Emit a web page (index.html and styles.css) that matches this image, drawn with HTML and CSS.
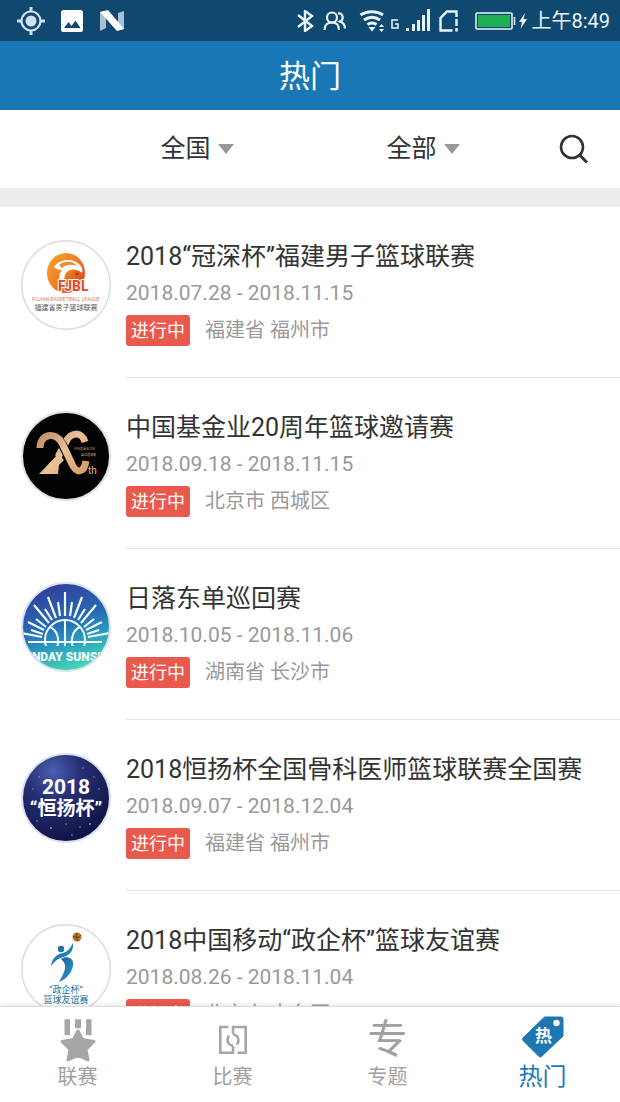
FILE: index.html
```html
<!DOCTYPE html>
<html lang="zh-CN">
<head>
<meta charset="utf-8">
<meta name="viewport" content="width=device-width, initial-scale=1">
<title>热门</title>
<link rel="stylesheet" href="styles.css">
</head>
<body>
<div class="app">
  <div class="status">
    <div class="status-left">
      <svg width="28" height="28" viewBox="0 0 28 28"><circle cx="14" cy="14" r="9.500" fill="none" stroke="#cfe0f2" stroke-width="2.200"/><circle cx="14" cy="14" r="5.500" fill="#cfe0f2"/><path d="M14 0v5M14 23v5M0 14h5M23 14h5" stroke="#cfe0f2" stroke-width="3"/></svg>
      <svg width="24" height="24" viewBox="0 0 24 24"><rect x="1" y="1" width="22" height="22" rx="2.500" fill="#fff"/><path d="M4 19l4.500-6 3 4 4-5.500 5 7.500z" fill="#10496f"/></svg>
      <svg width="26" height="22" viewBox="0 0 26 22"><path d="M1 2l6-1v17l-6 3zM25 1l-6 2v17l6-1z" fill="#a9c0d3"/><path d="M1 2l8-2L25 19l-7 2z" fill="#fff"/></svg>
    </div>
    <div class="status-right">
      <svg width="18" height="22" viewBox="0 0 18 22"><path d="M1 5l14 11-7 5V1l7 5L1 17" fill="none" stroke="#e8f7ff" stroke-width="2.400"/></svg>
      <svg class="people" width="24" height="20" viewBox="0 0 24 20"><g fill="none" stroke="#e8f7ff" stroke-width="2.200"><circle cx="9" cy="6.500" r="5"/><path d="M1.500 19c0-5 3-7.500 7.500-7.500s7 2.500 7 7.500M15 2.500c5-1 6.500 6 2 8 3 1 5 3.500 5 7"/></g></svg>
      <svg class="wifi" width="28" height="22" viewBox="0 0 28 22"><g fill="none" stroke="#e8f7ff" stroke-width="3"><path d="M1.500 5C8 .5 18 .5 24 5M5 10c5-3.500 11-3.500 16 0M8.500 14.500c3-2 6-2 9 0"/></g><path d="M9.500 17h7L13 21.500zM20 17l2.500-3 2.500 3zM20 19l2.500 3 2.500-3z" fill="#e8f7ff"/></svg>
      <svg class="network" width="8" height="10" viewBox="0 0 8 10"><path d="M7 1H1v8h6V5H4" fill="none" stroke="#e8f7ff" stroke-width="1.500"/></svg>
      <svg class="signal" width="24" height="23" viewBox="0 0 24 23"><path d="M1.500 19v3M7.500 15v7M12.500 11v11M17.500 6v16M22.500 0v22" stroke="#e8f7ff" stroke-width="3"/></svg>
      <svg class="sim" width="20" height="22" viewBox="0 0 20 22"><path d="M17.500 7V1.500H8L1.500 8v12.500h12M17.500 9v7M17.500 18v3.500" fill="none" stroke="#e8f7ff" stroke-width="2.400"/></svg>
      <svg class="battery" width="41" height="18" viewBox="0 0 41 18"><rect x="1" y="1" width="36" height="16" rx="1" fill="#10496f" stroke="#e8f7ff" stroke-width="1.500"/><rect x="3" y="3" width="32" height="12" fill="#1faf52"/><path d="M39.500 5v8" stroke="#e8f7ff" stroke-width="1.500"/></svg>
      <svg class="bolt" width="8" height="16" viewBox="0 0 8 16"><path d="M6 0L0 9h3l-1.500 7L8 6H4.500z" fill="#e8f7ff"/></svg>
      <span class="clock">上午8:49</span>
    </div>
  </div>

  <header class="header"><h1>热门</h1></header>

  <form class="filters">
    <label class="filter">
      <select aria-label="地区"><option>全国</option></select>
      <svg width="16" height="10" viewBox="0 0 16 10"><path d="M0 0h16L8 10z" fill="#999"/></svg>
    </label>
    <label class="filter">
      <select aria-label="类型"><option>全部</option></select>
      <svg width="16" height="10" viewBox="0 0 16 10"><path d="M0 0h16L8 10z" fill="#999"/></svg>
    </label>
    <button class="search" type="button" aria-label="搜索">
      <svg width="30" height="30" viewBox="0 0 30 30"><g fill="none" stroke="#333" stroke-width="2.600"><circle cx="13" cy="13" r="11"/><path d="M20.500 21l7.500 7.500" stroke-width="3"/></g></svg>
    </button>
  </form>

  <main class="list">
    <article class="item">
      <svg class="avatar" viewBox="0 0 90 90" role="img" aria-label="FJBL">
        <defs><linearGradient id="fire" x1="0" y1="0" x2="1" y2="1"><stop offset="0" stop-color="#f6a92a"/><stop offset=".5" stop-color="#ef7d23"/><stop offset="1" stop-color="#c9351f"/></linearGradient></defs>
        <circle cx="45" cy="45" r="44.300" fill="#fff" stroke="#dcdcdc" stroke-width="1.400"/>
        <ellipse cx="45" cy="33" rx="19" ry="20" fill="url(#fire)"/>
        <path d="M33 27c5-8 19-10 26-2 2 2 3 5 2 8-6-5-13-4-16 0-3 5-2 10 1 15h-5c-4-6-4-13 0-18-3 0-6-1-8-3z" fill="#fff"/>
        <path d="M38 25c6-5 15-4 18 1-5-2-11-2-15 2z" fill="#ef8a26"/>
        <circle cx="56" cy="34" r="1.500" fill="#b33118"/>
        <text class="logo-fjbl" x="37" y="51">FJBL</text>
        <text class="logo-fjbl-en" x="45" y="61">FUJIAN BASKETBALL LEAGUE</text>
        <text class="logo-fjbl-cn" x="45" y="70">福建省男子篮球联赛</text>
      </svg>
      <div class="info">
        <h2>2018“冠深杯”福建男子篮球联赛</h2>
        <p class="date">2018.07.28 - 2018.11.15</p>
        <p class="meta"><span class="tag">进行中</span><span>福建省 福州市</span></p>
      </div>
    </article>

    <article class="item">
      <svg class="avatar" viewBox="0 0 90 90" role="img" aria-label="20th">
        <defs><linearGradient id="gold" gradientUnits="userSpaceOnUse" x1="16" y1="20" x2="66" y2="64"><stop offset="0" stop-color="#b98463"/><stop offset=".5" stop-color="#e9c296"/><stop offset="1" stop-color="#d59a62"/></linearGradient></defs>
        <circle cx="45" cy="45" r="44" fill="#030303" stroke="#e2e2e2" stroke-width="2"/>
        <path d="M18 63l19-20 6 6-5 5-1 9z" fill="url(#gold)"/>
        <path d="M64 31c-3-11-15-10-19 0l-8 15" fill="none" stroke="url(#gold)" stroke-width="7"/>
        <path d="M21 37c0-14 14-15 20-4l10 19" fill="none" stroke="#030303" stroke-width="9"/>
        <path d="M19 37c0-14 15-17 22-5l9 19c5 12 13 12 15-1" fill="none" stroke="url(#gold)" stroke-width="7"/>
        <text class="logo-tiny" x="53" y="39">中国基金业20年</text>
        <text class="logo-tiny" x="60" y="45">篮球邀请赛</text>
        <text class="logo-th" x="67" y="63">th</text>
      </svg>
      <div class="info">
        <h2>中国基金业20周年篮球邀请赛</h2>
        <p class="date">2018.09.18 - 2018.11.15</p>
        <p class="meta"><span class="tag">进行中</span><span>北京市 西城区</span></p>
      </div>
    </article>

    <article class="item">
      <svg class="avatar" viewBox="0 0 90 90" role="img" aria-label="SUNDAY SUNSET">
        <defs>
          <linearGradient id="dusk" x1=".3" y1="0" x2=".6" y2="1"><stop offset="0" stop-color="#303d9c"/><stop offset=".45" stop-color="#286ab4"/><stop offset=".7" stop-color="#2a9fc0"/><stop offset="1" stop-color="#49dbb2"/></linearGradient>
          <clipPath id="disc"><circle cx="45" cy="45" r="43"/></clipPath>
          <clipPath id="sky"><path d="M0 0h90v64H0z"/></clipPath>
        </defs>
        <circle cx="45" cy="45" r="44" fill="url(#dusk)" stroke="#dde3ee" stroke-width="2"/>
        <g clip-path="url(#disc)">
          <g clip-path="url(#sky)" fill="none" stroke="#f4fbff" stroke-width="2">
            <circle cx="44" cy="58" r="20"/>
            <path d="M44 38v26M29 45c9 4 9 15 7 20M59 45c-9 4-9 15-7 20M16 60h57"/>
            <path d="M44 34V10M49 34l2-14M39 34l-2-14M53 36l8-21M35 36l-8-21M57 38l7-11M31 38l-7-11M60 41l15-18M28 41L13 23M63 45l10-8M25 45l-10-8M65 48l16-8M23 48L7 40M66 52l12-4M22 52l-12-4M67 55l22-4M21 55L0 51M68 60h13M20 60H7" stroke-width="2.200"/>
          </g>
          <text class="logo-sunset" x="43" y="79">SUNDAY SUNSET</text>
        </g>
      </svg>
      <div class="info">
        <h2>日落东单巡回赛</h2>
        <p class="date">2018.10.05 - 2018.11.06</p>
        <p class="meta"><span class="tag">进行中</span><span>湖南省 长沙市</span></p>
      </div>
    </article>

    <article class="item">
      <svg class="avatar" viewBox="0 0 90 90" role="img" aria-label="2018 恒扬杯">
        <defs><radialGradient id="night" cx=".35" cy=".2" r=".8"><stop offset="0" stop-color="#4a5fae"/><stop offset=".4" stop-color="#262f74"/><stop offset="1" stop-color="#101445"/></radialGradient></defs>
        <circle cx="45" cy="45" r="44" fill="url(#night)" stroke="#dde0ee" stroke-width="2"/>
        <g fill="#7f96da"><circle cx="62" cy="15" r=".8"/><circle cx="73" cy="24" r=".8"/><circle cx="18" cy="24" r=".8"/><circle cx="12" cy="36" r=".7"/><circle cx="78" cy="36" r=".8"/><circle cx="16" cy="68" r=".8"/><circle cx="30" cy="75" r="1"/><circle cx="45" cy="71" r=".8"/><circle cx="59" cy="74" r=".8"/><circle cx="69" cy="71" r="1"/><circle cx="51" cy="82" r=".8"/></g>
        <text class="logo-year" x="45" y="41">2018</text>
        <text class="logo-cup" x="45" y="62">“恒扬杯”</text>
      </svg>
      <div class="info">
        <h2>2018恒扬杯全国骨科医师篮球联赛全国赛</h2>
        <p class="date">2018.09.07 - 2018.12.04</p>
        <p class="meta"><span class="tag">进行中</span><span>福建省 福州市</span></p>
      </div>
    </article>

    <article class="item">
      <svg class="avatar" viewBox="0 0 90 90" role="img" aria-label="政企杯 篮球友谊赛">
        <defs><linearGradient id="sea" x1="0" y1="0" x2="1" y2="1"><stop offset="0" stop-color="#1c5c9b"/><stop offset="1" stop-color="#2b9bd2"/></linearGradient></defs>
        <circle cx="45" cy="45" r="44.300" fill="#fff" stroke="#dcdcdc" stroke-width="1.400"/>
        <circle cx="56" cy="13" r="4.500" fill="#b87928"/><path d="M52 12c3 2 6 2 8-1M56 9c-1 3 0 6 1 8" fill="none" stroke="#5c3510" stroke-width="1"/>
        <circle cx="40" cy="25" r="3.200" fill="#2273af"/>
        <path d="M30 42c1-8 6-12 12-13 4-1 7-4 10-10 1 7-3 12-9 14-6 1-9 4-13 9z" fill="url(#sea)"/>
        <path d="M40 35c4-3 11-2 12 3 1 7-4 16-14 20 4-7 7-13 6-17-1-3-2-4-4-6z" fill="url(#sea)"/>
        <text class="logo-friend" x="45" y="69">“政企杯”</text>
        <text class="logo-friend" x="45" y="79">篮球友谊赛</text>
      </svg>
      <div class="info">
        <h2>2018中国移动“政企杯”篮球友谊赛</h2>
        <p class="date">2018.08.26 - 2018.11.04</p>
        <p class="meta"><span class="tag">进行中</span><span>北京市 丰台区</span></p>
      </div>
    </article>
  </main>

  <nav class="tabs">
    <a class="tab" href="#league">
      <svg viewBox="0 0 44 48"><path d="M8.500 5.300H14v16H8.500zM19 5.300h6v9h-6zM30 5.300h5.500v16H30z" fill="#a6a6a6"/><path d="M22 17l4.600 8.600 11.400 1.900-8 8 2 10.500-10-4.600-10 4.600 2-10.500-8-8 11.400-1.900z" fill="#a6a6a6" stroke="#a6a6a6" stroke-width="3" stroke-linejoin="round"/></svg>
      <span>联赛</span>
    </a>
    <a class="tab" href="#match">
      <svg viewBox="0 0 44 48"><g fill="none" stroke="#a6a6a6" stroke-width="2.600"><path d="M17.500 13H9.300v25.700H22V32M26.500 38.700h8.200V13H22v7"/><path d="M22 20.500a5.500 5.500 0 0 1 5.500 5.500c0 2-.5 3-1.500 4.500M22 31.500a5.500 5.500 0 0 1-5.500-5.500c0-2 .5-3 1.500-4.500"/></g></svg>
      <span>比赛</span>
    </a>
    <a class="tab" href="#topic">
      <b class="glyph">专</b>
      <span>专题</span>
    </a>
    <a class="tab tab-active" href="#hot" aria-current="page">
      <svg viewBox="0 0 44 48"><path d="M23.500 3H40a2 2 0 0 1 2 2v17L20.500 42.500a2 2 0 0 1-2.500 0L2 26.500a2 2 0 0 1 0-2.500z" fill="#1d77b3" stroke="#1d77b3" stroke-width="1"/><circle cx="35.500" cy="9" r="3.200" fill="#fff"/><text class="tag-char" x="22.500" y="28">热</text></svg>
      <span>热门</span>
    </a>
  </nav>
</div>
</body>
</html>
```
FILE: styles.css
```css
* { box-sizing: border-box; }

body {
  margin: 0;
  background: #fff;
  color: #333;
  font-family: Roboto, "Noto Sans CJK SC", sans-serif;
}

h1, h2, p { margin: 0; font-weight: 400; }

svg { display: block; flex: none; }

.app {
  display: flex;
  flex-direction: column;
  height: 100vh;
}

.status {
  display: flex;
  justify-content: space-between;
  align-items: center;
  flex: none;
  height: 41px;
  padding: 0 10px 0 17px;
  background: #10496f;
}

.status-left { display: flex; align-items: center; gap: 15px; }
.status-right { display: flex; align-items: center; }
.people { margin-left: 8px; }
.wifi { margin-left: 12px; }
.network { margin: 6px 0 0 4px; }
.signal { margin-left: 7px; }
.sim { margin-left: 9px; }
.battery { margin-left: 16px; }
.bolt { margin-left: 3px; }

.clock {
  margin-left: 4px;
  color: #e8f7ff;
  font-size: 20px;
  line-height: 28px;
}

.header {
  display: flex;
  justify-content: center;
  align-items: center;
  flex: none;
  height: 69px;
  padding-top: 2px;
  background: #1977b5;
  color: #fff;
}

.header h1 { font-size: 31px; line-height: 40px; }

.filters {
  display: grid;
  grid-template-columns: 1fr 1fr 84px;
  align-items: center;
  flex: none;
  height: 97px;
  padding-left: 84px;
  border-bottom: 19px solid #ededed;
}

.filter {
  display: flex;
  justify-content: center;
  align-items: center;
  gap: 6px;
}

.filter select {
  appearance: none;
  padding: 0;
  border: 0;
  background: none;
  color: #333;
  font-family: inherit;
  font-size: 25px;
  line-height: 36px;
}

.search {
  justify-self: center;
  padding: 0 9px 0 0;
  border: 0;
  background: none;
}

.list { flex: 1; min-height: 0; overflow: hidden; }

.item { display: flex; gap: 15px; padding-left: 21px; }

.avatar { width: 90px; height: 90px; margin-top: 33px; }

.info {
  flex: 1;
  min-width: 0;
  padding: 34px 0 31px;
  border-bottom: 1px solid #e4e4e4;
}

.info h2 { font-size: 25px; line-height: 32px; white-space: nowrap; }

.date {
  margin-top: 7px;
  color: #999;
  font-size: 21px;
  line-height: 26px;
}

.meta {
  display: flex;
  align-items: center;
  gap: 15px;
  margin-top: 9px;
  color: #999;
  font-size: 20px;
  line-height: 31px;
}

.tag {
  padding: 0 5px;
  border-radius: 3px;
  background: #e95a4c;
  color: #fff;
  font-size: 18px;
}

.logo-fjbl { fill: #e0491f; stroke: #fff; stroke-width: 2px; paint-order: stroke; font-size: 14px; font-weight: 700; }
.logo-fjbl-en { fill: #e57a68; font-size: 5px; text-anchor: middle; }
.logo-fjbl-cn { fill: #555; font-size: 7px; text-anchor: middle; }
.logo-tiny { fill: #bd9c80; font-size: 3px; }
.logo-th { fill: #e2b98c; font-size: 10px; }
.logo-sunset { fill: #f4fbff; font-size: 12px; font-weight: 900; text-anchor: middle; }
.logo-year { fill: #fff; font-size: 21px; font-weight: 700; text-anchor: middle; }
.logo-cup { fill: #fff; font-size: 19px; font-weight: 700; text-anchor: middle; }
.logo-friend { fill: #1c7396; font-size: 9px; text-anchor: middle; }

.tabs {
  display: grid;
  grid-template-columns: repeat(4, 1fr);
  flex: none;
  height: 96px;
  border-top: 1px solid #ddd;
  background: #fff;
  box-shadow: 0 -2px 4px rgba(0, 0, 0, 0.08);
  z-index: 1;
}

.tab {
  display: flex;
  flex-direction: column;
  align-items: center;
  padding-top: 7px;
  color: #a0a0a0;
  font-size: 20px;
  line-height: 30px;
  text-decoration: none;
}

.tab svg { width: 44px; height: 48px; }

.glyph {
  height: 48px;
  font-size: 40px;
  font-weight: 400;
  line-height: 52px;
}

.tab-active { color: #1d77b3; font-size: 24px; }

.tag-char { fill: #fff; font-size: 17px; font-weight: 700; text-anchor: middle; }
```
